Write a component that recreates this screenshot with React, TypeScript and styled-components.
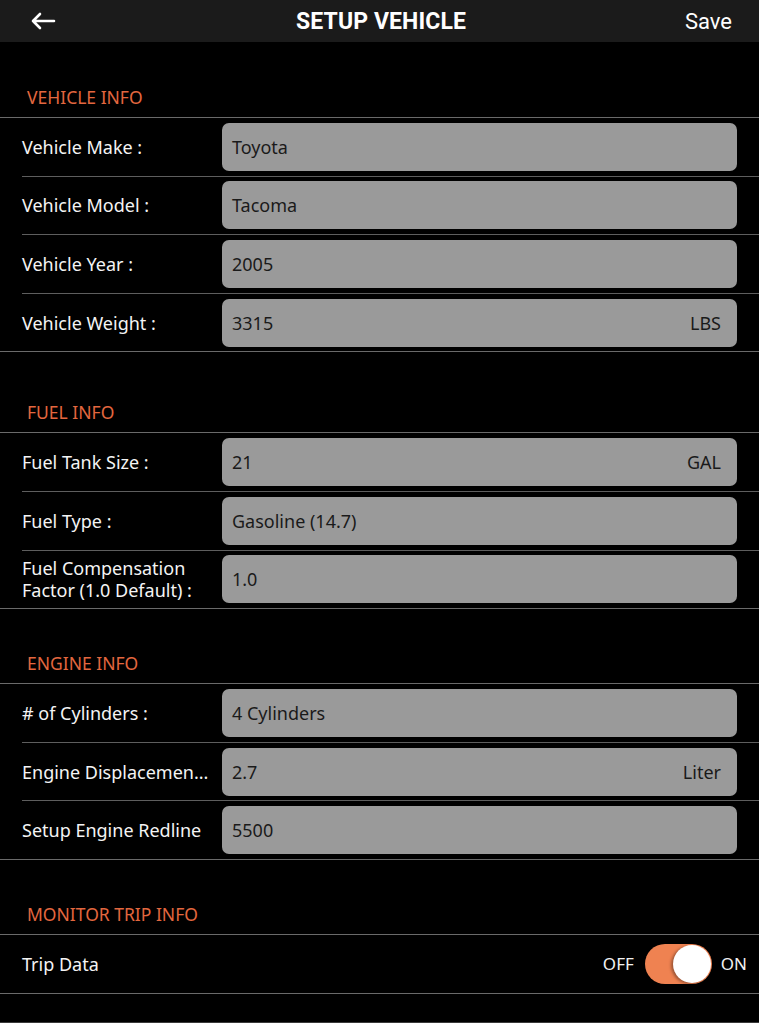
import React from "react";
import styled, { createGlobalStyle } from "styled-components";

const Global = createGlobalStyle`
  html, body { margin: 0; padding: 0; background: #000; }
  body { font-family: "Noto Sans", "Lato", sans-serif; -webkit-font-smoothing: antialiased; }
  * { box-sizing: border-box; }
`;

const Page = styled.div`
  width: 759px;
  min-height: 1023px;
  background: #000;
  color: #f2f2f2;
`;

const NavBar = styled.header`
  height: 42px;
  background: #1b1b1b;
  display: grid;
  grid-template-columns: 120px 1fr 120px;
  align-items: center;
  padding: 0 27px 0 30px;
`;

const BackButton = styled.button`
  background: none;
  border: 0;
  padding: 0;
  display: flex;
  align-items: center;
  justify-self: start;
  color: #fff;
  cursor: pointer;
`;

const Title = styled.h1`
  margin: 0;
  text-align: center;
  font-family: "Roboto", "Liberation Sans", sans-serif;
  font-weight: 700;
  font-size: 23px;
  letter-spacing: 0.1px;
  color: #fff;
`;

const SaveButton = styled.button`
  justify-self: end;
  background: none;
  border: 0;
  padding: 0;
  font-family: "Roboto", "Liberation Sans", sans-serif;
  font-size: 22px;
  color: #fff;
`;

const SectionHeader = styled.div<{ $h: number }>`
  height: ${(p) => p.$h}px;
  display: flex;
  align-items: flex-end;
  padding: 0 0 8px 27px;
  font-size: 17.5px;
  color: #e3673f;
`;

const Group = styled.div`
  border-top: 1px solid #6a6a6a;
  border-bottom: 1px solid #6a6a6a;
`;

const Row = styled.div`
  height: 57.6px;
  display: flex;
  align-items: center;
  padding: 0 22px;
`;

const Separator = styled.div`
  height: 1px;
  margin-left: 22px;
  background: #5e5e5e;
`;

const Label = styled.div`
  width: 200px;
  flex: none;
  font-size: 18px;
  line-height: 22px;
  color: #f4f4f4;
`;

const Field = styled.div`
  flex: 1;
  height: 48px;
  background: #9a9a9a;
  border-radius: 7px;
  display: flex;
  align-items: center;
  justify-content: space-between;
  padding: 0 16px 0 10px;
  font-size: 18px;
  color: #1a1a1a;
`;

const Unit = styled.span`
  color: #1a1a1a;
`;

const ToggleArea = styled.div`
  margin-left: auto;
  margin-right: -10px;
  display: flex;
  align-items: center;
  gap: 9px;
  font-size: 17px;
  color: #f2f2f2;
`;

const Track = styled.div<{ $on: boolean }>`
  width: 67px;
  height: 40px;
  border-radius: 20px;
  background: ${(p) => (p.$on ? "#ef8251" : "#555")};
  padding: 1px;
  display: flex;
  justify-content: ${(p) => (p.$on ? "flex-end" : "flex-start")};
  margin-left: 2px;
`;

const Knob = styled.div`
  width: 38px;
  height: 38px;
  border-radius: 50%;
  background: #fff;
  box-shadow: -2px 1px 3px rgba(0, 0, 0, 0.35);
`;

const Footer = styled.div`
  height: 29px;
  border-bottom: 1px solid #3a3a3a;
`;

type Item = { label: string; value: string; unit?: string };

const sections: { title: string; h: number; items: Item[] }[] = [
  {
    title: "VEHICLE INFO",
    h: 75,
    items: [
      { label: "Vehicle Make :", value: "Toyota" },
      { label: "Vehicle Model :", value: "Tacoma" },
      { label: "Vehicle Year :", value: "2005" },
      { label: "Vehicle Weight :", value: "3315", unit: "LBS" },
    ],
  },
  {
    title: "FUEL INFO",
    h: 80,
    items: [
      { label: "Fuel Tank Size :", value: "21", unit: "GAL" },
      { label: "Fuel Type :", value: "Gasoline (14.7)" },
      { label: "Fuel Compensation Factor (1.0 Default) :", value: "1.0" },
    ],
  },
  {
    title: "ENGINE INFO",
    h: 74,
    items: [
      { label: "# of Cylinders :", value: "4 Cylinders" },
      { label: "Engine Displacemen...", value: "2.7", unit: "Liter" },
      { label: "Setup Engine Redline", value: "5500" },
    ],
  },
];

export default function App() {
  return (
    <Page>
      <Global />
      <NavBar>
        <BackButton aria-label="Back">
          <svg width="26" height="18" viewBox="0 0 26 18" fill="none">
            <path d="M24 9H3M10 2L3 9l7 7" stroke="#fff" strokeWidth="2.6" strokeLinecap="round" strokeLinejoin="round" />
          </svg>
        </BackButton>
        <Title>SETUP VEHICLE</Title>
        <SaveButton>Save</SaveButton>
      </NavBar>

      {sections.map((s) => (
        <section key={s.title}>
          <SectionHeader $h={s.h}>{s.title}</SectionHeader>
          <Group>
            {s.items.map((it, i) => (
              <React.Fragment key={it.label}>
                {i > 0 && <Separator />}
                <Row>
                  <Label>{it.label}</Label>
                  <Field>
                    <span>{it.value}</span>
                    {it.unit && <Unit>{it.unit}</Unit>}
                  </Field>
                </Row>
              </React.Fragment>
            ))}
          </Group>
        </section>
      ))}

      <section>
        <SectionHeader $h={74}>MONITOR TRIP INFO</SectionHeader>
        <Group>
          <Row>
            <Label>Trip Data</Label>
            <ToggleArea>
              <span>OFF</span>
              <Track $on>
                <Knob />
              </Track>
              <span>ON</span>
            </ToggleArea>
          </Row>
        </Group>
      </section>
      <Footer />
    </Page>
  );
}
